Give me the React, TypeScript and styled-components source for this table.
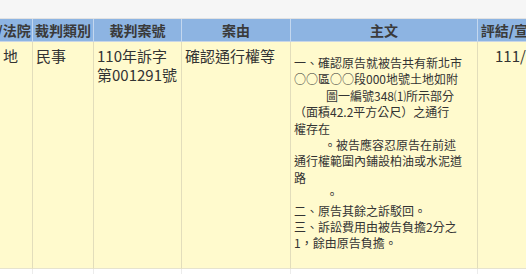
import React from "react";
import styled, { createGlobalStyle } from "styled-components";

const Global = createGlobalStyle`
  html, body { margin: 0; padding: 0; background: #ffffff; overflow: hidden; }
  body { font-family: "Noto Sans CJK TC", "Noto Sans", sans-serif; color: #333; }
`;

const Page = styled.div`
  width: 526px;
  height: 274px;
  overflow: hidden;
  display: flex;
  flex-direction: column;
`;

const TopStrip = styled.div`
  height: 18px;
  flex: none;
  background: #f6f6f6;
  border-bottom: 1px solid #e2e2e2;
`;

const Table = styled.table`
  border-collapse: separate;
  border-spacing: 0;
  table-layout: fixed;
  width: 606px;
  margin-left: -32px;
  font-family: "Noto Sans CJK TC", "Noto Sans", sans-serif;
`;

const Th = styled.th`
  background: #8db4e2;
  color: #3a3a3a;
  font-size: 14px;
  font-weight: 700;
  height: 22px;
  padding: 0;
  line-height: 22px;
  text-align: center;
  white-space: nowrap;
  overflow: hidden;
  border-right: 1px solid #c3d7ef;
  border-bottom: 1px solid #c9d6e6;
`;

const Td = styled.td<{ $padLeft?: number }>`
  background: #fffacd;
  font-size: 15px;
  line-height: 19px;
  vertical-align: top;
  text-align: left;
  padding: 4px 3px 4px ${(p) => (p.$padLeft ?? 3)}px;
  color: #333;
  white-space: nowrap;
  border-right: 1px solid #e2ddbb;
  border-bottom: 1px solid #e6e3cf;
  overflow: hidden;
`;

const MainCell = styled.td`
  background: #fffacd;
  vertical-align: top;
  padding: 13px 3px 16px 3px;
  border-right: 1px solid #e2ddbb;
  border-bottom: 1px solid #e6e3cf;
  font-size: 12px;
  line-height: 16.4px;
  color: #333;
`;

const EmptyTd = styled.td`
  background: #ffffff;
  height: 10px;
  border-right: 1px solid #ececec;
`;

const Line = styled.div<{ $indent?: number }>`
  white-space: nowrap;
  padding-left: ${(p) => p.$indent || 0}px;
`;

const lines: [string, number][] = [
  ["一、確認原告就被告共有新北市", 0],
  ["○○區○○段000地號土地如附", 0],
  ["圖一編號348⑴所示部分", 32],
  ["（面積42.2平方公尺）之通行", 0],
  ["權存在", 0],
  ["。被告應容忍原告在前述", 30],
  ["通行權範圍內鋪設柏油或水泥道", 0],
  ["路", 0],
  ["。", 32],
  ["二、原告其餘之訴駁回。", 0],
  ["三、訴訟費用由被告負擔2分之", 0],
  ["1，餘由原告負擔。", 0],
];

export default function App() {
  return (
    <Page>
      <Global />
      <TopStrip />
      <Table>
        <colgroup>
          <col style={{ width: 65 }} />
          <col style={{ width: 61 }} />
          <col style={{ width: 88 }} />
          <col style={{ width: 109 }} />
          <col style={{ width: 187 }} />
          <col style={{ width: 96 }} />
        </colgroup>
        <thead>
          <tr>
            <Th>審判/法院</Th>
            <Th>裁判類別</Th>
            <Th>裁判案號</Th>
            <Th>案由</Th>
            <Th>主文</Th>
            <Th>評結/宣判日期</Th>
          </tr>
        </thead>
        <tbody>
          <tr>
            <Td $padLeft={35}>地</Td>
            <Td>民事</Td>
            <Td>
              110年訴字
              <br />
              第001291號
            </Td>
            <Td>確認通行權等</Td>
            <MainCell>
              {lines.map(([t, i], k) => (
                <Line key={k} $indent={i}>
                  {t}
                </Line>
              ))}
            </MainCell>
            <Td $padLeft={17}>111/03/24</Td>
          </tr>
          <tr>
            <EmptyTd />
            <EmptyTd />
            <EmptyTd />
            <EmptyTd />
            <EmptyTd />
            <EmptyTd />
          </tr>
        </tbody>
      </Table>
    </Page>
  );
}
